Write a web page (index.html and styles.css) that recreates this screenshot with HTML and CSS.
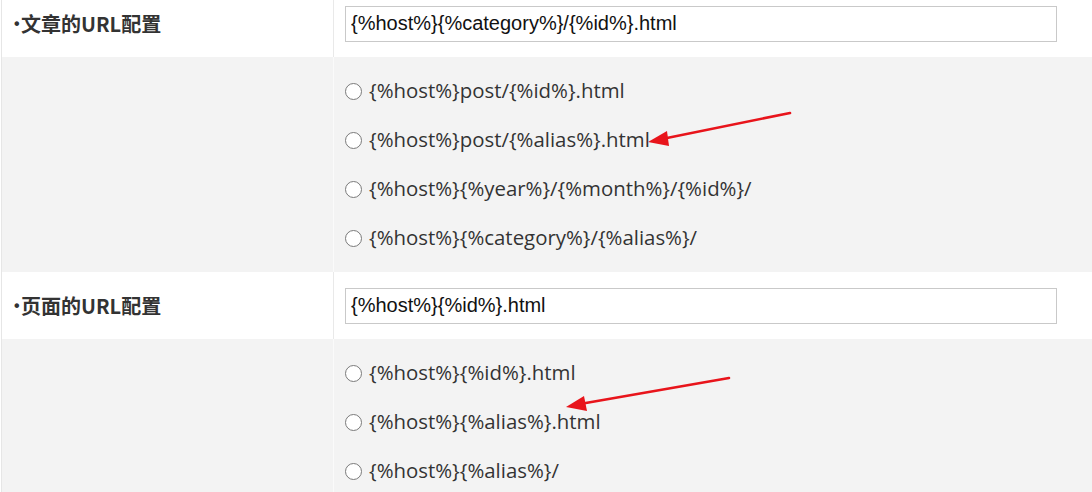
FILE: index.html
```html
<!DOCTYPE html>
<html lang="zh-CN">
<head>
<meta charset="utf-8">
<title>URL配置</title>
<link rel="stylesheet" href="styles.css">
</head>
<body>
<div class="settings">
  <div class="row row-white">
    <div class="label-cell"><span class="bullet">•</span>文章的URL配置</div>
    <div class="value-cell"><input class="url-input" type="text" value="{%host%}{%category%}/{%id%}.html"></div>
  </div>
  <div class="row row-gray">
    <div class="label-cell"></div>
    <div class="value-cell options">
      <label class="option"><input type="radio" name="post"><span class="option-text">{%host%}post/{%id%}.html</span></label>
      <label class="option"><input type="radio" name="post"><span class="option-text">{%host%}post/{%alias%}.html</span></label>
      <label class="option"><input type="radio" name="post"><span class="option-text">{%host%}{%year%}/{%month%}/{%id%}/</span></label>
      <label class="option"><input type="radio" name="post"><span class="option-text">{%host%}{%category%}/{%alias%}/</span></label>
    </div>
  </div>
  <div class="row row-white">
    <div class="label-cell"><span class="bullet">•</span>页面的URL配置</div>
    <div class="value-cell"><input class="url-input" type="text" value="{%host%}{%id%}.html"></div>
  </div>
  <div class="row row-gray">
    <div class="label-cell"></div>
    <div class="value-cell options">
      <label class="option"><input type="radio" name="page"><span class="option-text">{%host%}{%id%}.html</span></label>
      <label class="option"><input type="radio" name="page"><span class="option-text">{%host%}{%alias%}.html</span></label>
      <label class="option"><input type="radio" name="page"><span class="option-text">{%host%}{%alias%}/</span></label>
    </div>
  </div>
</div>
<svg class="arrows" width="1092" height="492" viewBox="0 0 1092 492">
  <line x1="790" y1="113" x2="662" y2="139" stroke="#e8141b" stroke-width="2.6" stroke-linecap="round"/>
  <polygon points="648,142 667,131 669,146" fill="#e8141b"/>
  <line x1="729" y1="378" x2="580" y2="404" stroke="#e8141b" stroke-width="2.6" stroke-linecap="round"/>
  <polygon points="566,407 584,396 587,411" fill="#e8141b"/>
</svg>
</body>
</html>
```
FILE: styles.css
```css
html, body {
  margin: 0;
  padding: 0;
  background: #fff;
  overflow: hidden;
}
body {
  width: 1092px;
  height: 492px;
  position: relative;
  font-family: "Open Sans", "Noto Sans CJK SC", sans-serif;
  color: #333;
}
.settings {
  margin-top: -10px;
  margin-left: 1px;
  border-left: 1px solid #e6e6e6;
}
.row {
  display: grid;
  grid-template-columns: 332px 1fr;
}
.row-white {
  background: #fff;
  min-height: 67px;
}
.row-gray {
  background: #f3f3f3;
}
.label-cell {
  border-right: 1px solid #e9e9e9;
  padding-left: 12px;
  display: flex;
  align-items: center;
  font-family: "Noto Sans CJK SC", sans-serif;
  font-weight: 700;
  font-size: 20px;
  color: #333;
}
.bullet {
  font-family: "Liberation Sans", Arial, sans-serif;
  font-size: 16px;
  width: 7px;
}
.row-gray .label-cell {
  border-right-color: #fafafa;
}
.value-cell {
  padding-left: 11px;
  display: flex;
  align-items: center;
}
.url-input {
  box-sizing: border-box;
  width: 712px;
  height: 36px;
  border: 1px solid #c9c9c9;
  padding: 0 5px;
  margin: 0;
  font-family: "Liberation Sans", Arial, sans-serif;
  font-size: 20px;
  color: #111;
  background: #fff;
  outline: none;
}
.options {
  flex-direction: column;
  align-items: flex-start;
  padding-top: 10px;
  padding-bottom: 9px;
}
.option {
  height: 49px;
  display: flex;
  align-items: center;
  font-size: 20.4px;
  color: #333;
}
.option-text {
  margin-bottom: 3px;
}
.option input {
  appearance: none;
  -webkit-appearance: none;
  box-sizing: border-box;
  width: 17px;
  height: 17px;
  margin: 0 7px 1px 0;
  border: 1px solid #7a7a7a;
  border-radius: 50%;
  background: #fff;
}
.arrows {
  position: absolute;
  left: 0;
  top: 0;
  pointer-events: none;
}
```
